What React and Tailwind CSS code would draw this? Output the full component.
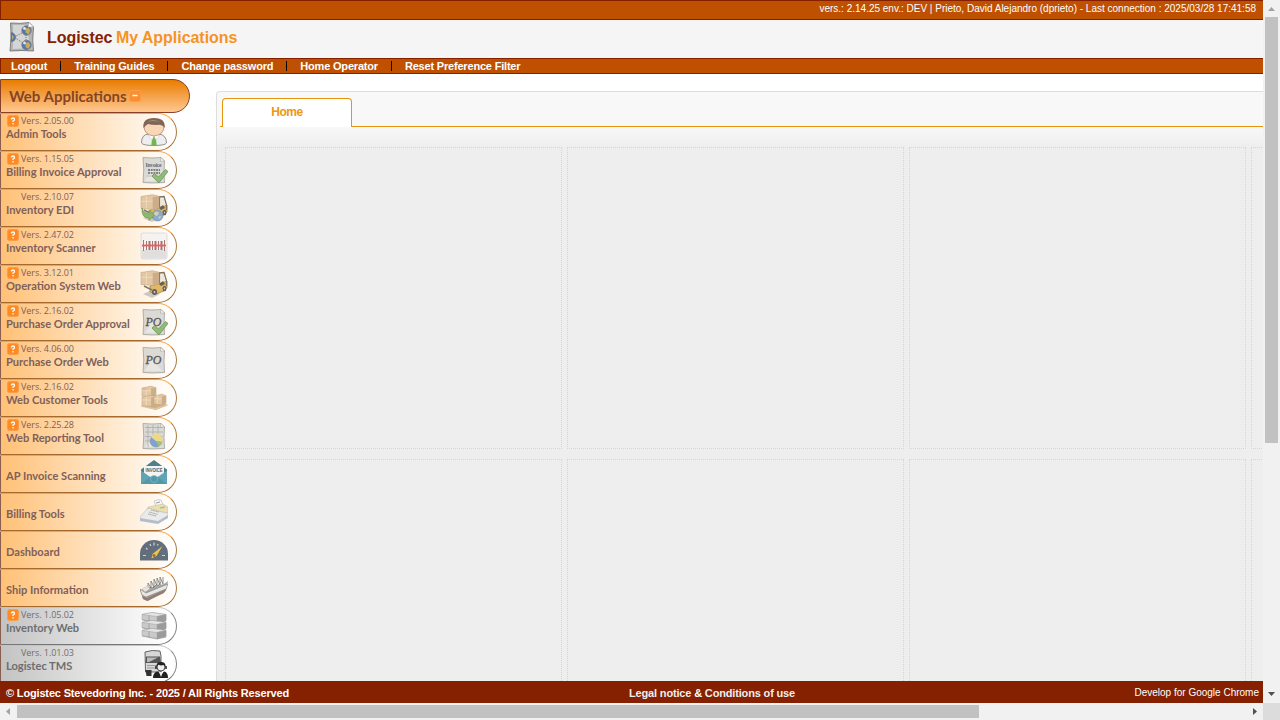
import React from "react";

const NAV = ["Logout", "Training Guides", "Change password", "Home Operator", "Reset Preference Filter"];

const APPS = [
  { name: "Admin Tools", version: "2.05.00", help: true, icon: "user" },
  { name: "Billing Invoice Approval", version: "1.15.05", help: true, icon: "invoice" },
  { name: "Inventory EDI", version: "2.10.07", icon: "edi" },
  { name: "Inventory Scanner", version: "2.47.02", help: true, icon: "scanner" },
  { name: "Operation System Web", version: "3.12.01", help: true, icon: "forklift" },
  { name: "Purchase Order Approval", version: "2.16.02", help: true, icon: "poCheck" },
  { name: "Purchase Order Web", version: "4.06.00", help: true, icon: "po" },
  { name: "Web Customer Tools", version: "2.16.02", help: true, icon: "boxes" },
  { name: "Web Reporting Tool", version: "2.25.28", help: true, icon: "report" },
  { name: "AP Invoice Scanning", icon: "envelope" },
  { name: "Billing Tools", icon: "register" },
  { name: "Dashboard", icon: "gauge" },
  { name: "Ship Information", icon: "ship" },
  { name: "Inventory Web", version: "1.05.02", help: true, icon: "stack", gray: true },
  { name: "Logistec TMS", version: "1.01.03", icon: "truck", gray: true },
];

const Paper = () => (
  <g>
    <path d="M3 1.500 Q12 2.500 21 1.500 L24.500 5 Q23.500 15 24.500 26.500 Q12 27.500 3 26.500 Q4.500 14 3 1.500Z" fill="#d8d7d3" stroke="#989793" strokeWidth=".8" />
    <path d="M21 1.500 L20.500 5.200 L24.500 5Z" fill="#fafafa" stroke="#888" strokeWidth=".5" />
    <path d="M5 25 L12 13 L22 25Z" fill="#f0efed" opacity=".6" />
  </g>
);

const Check = () => (
  <path d="M12 20 L14.500 17.500 L18.500 21 L25.500 13.500 L28 15.500 L18.800 27 Z" fill="#86b56c" stroke="#558a40" strokeWidth=".8" />
);

const Box = ({ x, y, w, h }) => (
  <g>
    <path d={`M${x} ${y + 2} l${w * 0.65} -1.8 l${w * 0.35} 1.5 v${h - 2} l${-w * 0.35} 1.8 l${-w * 0.65} -1z`} fill="#e0c29d" stroke="#b2936c" strokeWidth=".5" />
    <path d={`M${x + w * 0.65} ${y + 2.5} l${w * 0.35} -.8 v${h - 2} l${-w * 0.35} 1.8z`} fill="#c6a57f" />
    <path d={`M${x} ${y + h / 2} h${w * 0.65} M${x + w * 0.3} ${y + 1.5} v${h - 1}`} stroke="#f4dfbd" strokeWidth=".7" />
  </g>
);

const Lift = () => (
  <g>
    <path d="M3 24 L12 20 L20 24 L12 28Z" fill="#888" opacity=".45" />
    <path d="M18 14 L27 11 V18 L24 21 L16 24 L10 22 L10 16Z" fill="#dfb254" stroke="#83703e" strokeWidth=".7" />
    <path d="M19.500 13V3 L24 2.500 L26.500 11 V16" fill="none" stroke="#716650" strokeWidth="1.400" />
    <path d="M20.500 4.500 L23.500 4 L25.500 11 L21 12.500Z" fill="#eee7d4" />
    <path d="M19 14l4-3 2 3-4 2z" fill="#545149" />
    <ellipse cx="14.500" cy="22" rx="2.600" ry="3" fill="#555149" /><ellipse cx="24.500" cy="18.500" rx="2" ry="2.700" fill="#555149" />
    <ellipse cx="14.500" cy="22" rx=".9" ry="1.100" fill="#ccc" /><ellipse cx="24.500" cy="18.500" rx=".7" ry="1" fill="#ccc" />
    <path d="M4 16l8 4" stroke="#70695b" strokeWidth="1.400" />
    <Box x={1} y={0.5} w={18} h={13.5} />
  </g>
);

const PoText = () => (
  <text x="5.500" y="17.500" fontFamily="Liberation Serif" fontSize="12" fontStyle="italic" fill="#484643" stroke="#484643" strokeWidth=".3" textLength="16" lengthAdjust="spacingAndGlyphs">PO</text>
);

const ICONS = {
  user: (
    <g>
      <path d="M1.500 25 Q1.500 16 9 16 H19 Q26.500 17 26.500 25 Q25 27.500 14 27.500 Q3 27.500 1.500 25Z" fill="#eeeef0" stroke="#777" strokeWidth=".8" />
      <path d="M12.500 18h3l1.200 9h-5.400z" fill="#73b84c" /><path d="M8 17 L12 22 L14 18 L16 22 L20 17" fill="#fff" stroke="#bbb" strokeWidth=".5" />
      <path d="M4 8 Q5 1 14 1 Q23 1 24 8 Q24 17 14 18 Q4 17 4 8Z" fill="#f9d6b5" stroke="#94745b" strokeWidth=".6" />
      <path d="M3.500 10 Q2 0 14 0 Q26 0 24.500 10 Q22 6 17 7 Q11 7 8 6 Q6 7 3.500 10Z" fill="#806657" />
      <path d="M7 4 Q13 0 20 4 Q13 2 7 4Z" fill="#a88c79" />
    </g>
  ),
  invoice: (
    <g><Paper />
      <text x="5.500" y="10.500" fontFamily="Liberation Serif" fontWeight="bold" fontSize="5.500" fill="#555" textLength="16">Invoice</text>
      <path d="M8 14h12M8 17h12" stroke="#555" strokeWidth="1.400" strokeDasharray="2 .7" /><path d="M7 20h10" stroke="#999" strokeWidth=".6" /><Check />
    </g>
  ),
  edi: (
    <g><Lift /><circle cx="17.500" cy="21.500" r="5.500" fill="#7fa4cc" stroke="#617f9f" strokeWidth=".6" /><path d="M14 19q3-3 5 0l-2 3-3-1zM18 23l3-1-1 3z" fill="#d9cd9c" />
      <path d="M2 14 Q4 20 9 19 L9 16 L14.500 21 L9 26.500 L9 24 Q1 24 2 14Z" fill="#83b05e" stroke="#5d863e" strokeWidth=".6" /></g>
  ),
  scanner: (
    <g>
      <rect x="1" y="1" width="26" height="26" rx="2" fill="#f5f3f3" stroke="#d7d3d3" strokeWidth=".8" />
      <path d="M1.500 18h25v7q0 1.500-2 1.500H3q-1.500 0-1.500-2z" fill="#dedcdd" />
      <path d="M3.500 8v11M6.500 9v9M12.500 9v9M18.500 9v9M24.500 8v11" stroke="#946969" strokeWidth="1" /><path d="M9.500 9v9M15.500 9v9M21.500 9v9" stroke="#946969" strokeWidth="2" />
      <path d="M2 13.500h24" stroke="#fa4545" strokeWidth="1.800" />
    </g>
  ),
  forklift: <Lift />,
  poCheck: <g><Paper /><PoText /><Check /></g>,
  po: <g><Paper /><PoText /></g>,
  boxes: (
    <g><path d="M2 22 L17 18 L28 21 L16 26Z" fill="#c6aa80" /><Box x={2} y={2} w={14} h={9.5} /><Box x={2} y={11} w={14} h={10} /><Box x={14} y={10} w={12} h={9.5} />
      <path d="M1 22l14 3 12-4" stroke="#dcc194" fill="none" strokeWidth="1.500" /><path d="M3 5h4" stroke="#dd9b88" /></g>
  ),
  report: (
    <g><Paper /><path d="M5 5.500h18M5 10h18M5 14.500h18M5 19h12M8 3v22M13 3v18M18 3v15" stroke="#a2a5a8" strokeWidth=".8" />
      <circle cx="16" cy="19" r="6" fill="#6f9bce" stroke="#7b8490" strokeWidth=".6" /><path d="M16 19L11 15A6 6 0 0 1 22 20Z" fill="#e9d67c" /><path d="M16 19L22 20A6 6 0 0 1 19 24.500Z" fill="#9dba6a" /></g>
  ),
  envelope: (
    <g><path d="M1 9.500 L14 0 L27 9.500V13H1Z" fill="#3f7281" /><path d="M4 6h20v10l-10 5L4 16z" fill="#f2f4f4" />
      <text x="5.500" y="12" fontFamily="Liberation Sans" fontWeight="bold" fontSize="5.500" fill="#414c50" textLength="17" lengthAdjust="spacingAndGlyphs">INVOICE</text>
      <path d="M1 10.500L11 17.500q3-2 6 0l10-7V24H1z" fill="#4f9cae" /><path d="M1 24L11 16.500q3-2 6 0L27 24z" fill="#3f8fa3" /><circle cx="14" cy="19" r="3.500" fill="none" stroke="#78b5c1" strokeWidth=".7" /></g>
  ),
  register: (
    <g transform="translate(0 2)"><path d="M14 1 Q18-1 21 0 L23 5 L16 6Z" fill="#f8f8f8" stroke="#aaa" strokeWidth=".6" /><path d="M16 3l4-1" stroke="#777" strokeWidth=".8" />
      <path d="M8 7L23 4 28 7V14L20 17 5 15Z" fill="#e9dda7" stroke="#b9b39c" strokeWidth=".5" />
      <path d="M0 17L8 8 22 12 28 13V17L19 22 0 20Z" fill="#e8eaeb" stroke="#a3a9ac" strokeWidth=".5" />
      <path d="M0 18L18 21 28 15V18L18 24 0 21Z" fill="#acb8c8" /><path d="M9 12l9 2.500M8 14l8 2M11 10l8 2" stroke="#9b9d97" strokeWidth="1" strokeDasharray="1.600 .6" /><path d="M20 8l5-1" stroke="#aab58d" strokeWidth="1.500" /></g>
  ),
  gauge: (
    <g transform="translate(0 2.500)"><path d="M0 22V15.500A14 14 0 0 1 28 15.500V22Z" fill="#526070" /><path d="M3 17h3M6 9.500l1.500 1.500M10 5.500l.8 2M14 4v3M22 17h3M18 5.500l-.5 1.500" stroke="#c9d0d3" strokeWidth="1.200" />
      <path d="M22.500 7.500L16.500 17.500 11.500 20 12.500 15.500Z" fill="#f0bf35" /><circle cx="14" cy="17" r="1.500" fill="#77693e" /></g>
  ),
  ship: (
    <g transform="translate(0 2)"><path d="M4 13L24 8 28 5 26 15 8 25 3 23 0 14Z" fill="#9c9c9d" /><path d="M0 13L6 17 28 8 26 13 6 21 2 19Z" fill="#e6e6e4" stroke="#666" strokeWidth=".5" />
      <path d="M2 20L7 22 26 13 24 17 7 25 3 23Z" fill="#88706a" /><path d="M8 14V7l3 5V5l3 6V3l3 7V2l3 7V1l3 7V1M6 14l5-3M13 12l4-4M18 10l3-4" fill="none" stroke="#686868" strokeWidth=".8" /><path d="M2 13l5-3 3 3-5 3z" fill="#e4e1dc" stroke="#999" strokeWidth=".3" /></g>
  ),
  stack: (
    <g>{[2.5, 10.5, 18.5].map((y) => <g key={y} stroke="#a0a0a0" strokeWidth=".5"><path d={`M2 ${y}L12 ${y - 2} 26 ${y}V${y + 6}L17 ${y + 8} 2 ${y + 5}Z`} fill="#cacaca" /><path d={`M2 ${y}L12 ${y - 2} 26 ${y} 17 ${y + 2}Z`} fill="#e5e5e5" /><path d={`M17 ${y + 2}L26 ${y}V${y + 6}L17 ${y + 8}Z`} fill="#9b9b9b" /><path d={`M9 ${y + 1}v6M2 ${y + 5.500}l15 3 9-2`} fill="none" stroke="#797979" /></g>)}</g>
  ),
  truck: (
    <g><path d="M5 2Q12-.5 20 1L21 6V22H5.500Z" fill="#d7d7d7" stroke="#444" strokeWidth=".8" /><path d="M6 6.500H20L21 13H5.500Z" fill="#555" /><path d="M7 7.500H18L9 12H7Z" fill="#bbb" /><path d="M7 15.500h12M7 18h9" stroke="#999" strokeWidth="1" /><path d="M5.500 20h6v6h-5z" fill="#333" />
      <circle cx="21" cy="17" r="4" fill="#eee" stroke="#222" strokeWidth=".8" /><path d="M16.500 17q-.5-5 4.500-5t4.500 5l-2-2q-3 1-5-.5z" fill="#222" /><path d="M16 16v3M26 16v3" stroke="#222" strokeWidth="1.500" /><path d="M13 28q0-6 5-6.500l3 3 3-3q4 .5 4 6.500z" fill="#222" /><path d="M19 22l2 5 2-5z" fill="#eee" /></g>
  ),
};

function Globe({ cx, cy }) {
  return <g><circle cx={cx} cy={cy} r="4.700" fill="#4d78b0" stroke="#777" strokeWidth=".8" /><path d={`M${cx - 1} ${cy - 2}l3-1 2 3-2 4-3-2z`} fill="#c5aa60" /><circle cx={cx - 2} cy={cy - 2} r="1.400" fill="#dce6ef" /></g>;
}

function Logo() {
  return (
    <svg className="ml-[9px] h-[30px] w-[26px] shrink-0" viewBox="0 0 26 30">
      <path d="M1.500 1Q12 2 20 .5L24.500 5Q23 19 24.500 29Q13 28 1 29Q3 14 1.500 1Z" fill="#b5b5b5" stroke="#666" strokeWidth=".8" />
      <path d="M4 3L18 3 21 26 4 27Z" fill="#d5d5d5" /><path d="M5 15L17 9M5 15L17 23M17 9V22" stroke="#777" strokeDasharray="1 1" fill="none" />
      <Globe cx={17.5} cy={8.5} /><path d="M2 10.500a4.700 4.700 0 0 1 0 9.400z" fill="#4d78b0" stroke="#777" strokeWidth=".6" /><path d="M3 13l2 2-2 3z" fill="#c5aa60" /><Globe cx={17.5} cy={23} /><path d="M20 .5L19 5 24.500 5Z" fill="#fff" stroke="#999" strokeWidth=".5" />
    </svg>
  );
}

function Badge() {
  return (
    <svg className="h-3 w-3" viewBox="0 0 12 12">
      <rect x=".5" y=".5" width="11" height="11" rx="2" fill="#fd8a24" stroke="#fd9c46" /><path d="M4.500 4.500q0-1.500 1.500-1.500t1.500 1.500q0 1-1.500 1.500v1M6 8v1.500" stroke="#fff" strokeWidth="1.300" fill="none" />
    </svg>
  );
}

function AppRow({ app }) {
  const tone = app.gray
    ? "border-t-[#c3c3c3] border-r-[#858585] border-b-[#777] bg-[linear-gradient(to_right,#c3c3c3,#ffffff_95%)] text-[#6e6e6e]"
    : "border-t-[#f9a33f] border-r-[#ad7739] border-b-[#a8692d] bg-[linear-gradient(to_right,#ffc177,#ffffff)] text-[#80605a]";
  return (
    <li className={`flex h-[38px] w-[177px] shrink-0 rounded-r-[19px] border border-l-[#8a5d51] ${tone}`}>
      <div className="flex w-[139px] shrink-0 flex-col items-start pl-[5px]">
        <div className="flex h-[13px] shrink-0 items-center">
          <span className="ml-px w-[14px] pt-px">{app.help && <Badge />}</span>
          {app.version && <span className="whitespace-nowrap font-['Open_Sans',sans-serif] text-[9px] leading-[13px] tracking-[-0.05px]">Vers. {app.version}</span>}
        </div>
        <span className="origin-left scale-x-[0.925] whitespace-nowrap font-['Lato',sans-serif] text-[12px] leading-[14px] font-bold">{app.name}</span>
      </div>
      <svg className={`mt-1 h-7 w-7 ${app.icon === "user" || app.gray ? "" : "opacity-90"}`} viewBox="0 0 28 28">{ICONS[app.icon]}</svg>
    </li>
  );
}

export default function App() {
  return (
    <div className="grid h-[720px] w-[1280px] grid-cols-[1263px_17px] grid-rows-[703px_17px] overflow-hidden bg-white font-['Liberation_Sans',sans-serif]">
      <div className="flex min-h-0 min-w-0 flex-col overflow-hidden">
        <div className="flex h-5 shrink-0 justify-end border border-r-0 border-[#851f00] bg-[#bf5000] pr-[7px] text-[10px] leading-4 text-white">
          <span className="whitespace-nowrap">vers.: 2.14.25 env.: DEV | Prieto, David Alejandro (dprieto) - Last connection : 2025/03/28 17:41:58</span>
        </div>
        <header className="flex h-[38px] shrink-0 items-center bg-[#f5f5f5] pb-1">
          <Logo />
          <h1 className="mt-0.5 ml-3 whitespace-nowrap text-[16px] font-bold tracking-[-0.04px] text-[#852000]">Logistec <span className="-ml-px text-[#f7931e]">My Applications</span></h1>
        </header>
        <nav className="flex h-4 shrink-0 items-center border border-r-0 border-[#851f00] bg-[#bf5000] pl-[10px] text-[11px] font-bold leading-[14px] tracking-[-0.19px] text-white">
          {NAV.map((item, i) => (
            <React.Fragment key={item}>
              {i > 0 && <span className="mx-[13px] h-[10px] w-px bg-black" />}
              <a className="whitespace-nowrap">{item}</a>
            </React.Fragment>
          ))}
        </nav>
        <div className="flex min-h-0 flex-1 overflow-hidden">
          <aside className="flex w-[216px] shrink-0 flex-col pt-[5px]">
            <h2 className="flex h-[34px] w-[190px] shrink-0 items-center rounded-r-[17px] border border-[#884127] bg-[linear-gradient(to_bottom,#e97c00,#ffc891)] pl-2 font-['Lato',sans-serif] text-[15px] font-bold text-[#854425]">
              <span className="w-[117px] whitespace-nowrap">Web Applications</span>
              <svg className="ml-[3px] h-3 w-3" viewBox="0 0 12 12"><rect x=".5" y=".5" width="11" height="11" rx="2" fill="#fc8e30" stroke="#fd9c48" /><path d="M3.500 5.500h5" stroke="#fff" strokeWidth="1.500" /></svg>
            </h2>
            <ul className="flex flex-col">{APPS.map((app) => <AppRow key={app.name} app={app} />)}</ul>
          </aside>
          <main className="mt-[17px] flex min-w-0 flex-1 flex-col overflow-hidden rounded-tl-[4px] border-t border-l border-[#ddd] bg-[#eeeeee]">
            <div className="flex h-[35px] shrink-0 items-end bg-[#f8f8f8]">
              <span className="h-px w-[5px] shrink-0 bg-[linear-gradient(to_right,transparent_3px,#e8940f_3px)]" />
              <div className="flex h-[29px] w-[130px] shrink-0 justify-center rounded-t-[4px] border border-b-0 border-[#e8940f] bg-white text-[12px] font-bold leading-[26px] tracking-[-0.4px] text-[#ee970f]">Home</div>
              <span className="h-px flex-1 bg-[#e8940f]" />
            </div>
            <div className="flex-1 bg-[linear-gradient(to_bottom,#f8f8f8,#eeeeee_20px)] pt-[20px] pl-2">
              <div className="grid grid-cols-[repeat(4,337px)] auto-rows-[302px] gap-x-[5px] gap-y-[10px]">
                {Array.from({ length: 8 }, (_, i) => <div key={i} className="border border-dotted border-[#ffcc99]" />)}
              </div>
            </div>
          </main>
        </div>
        <footer className="flex h-[22px] shrink-0 items-center bg-[#852000] pt-px pr-1 pl-[6px] text-[11px] font-bold leading-[20px] whitespace-nowrap text-white">
          <span className="w-[623px] shrink-0 tracking-[-0.16px]">© Logistec Stevedoring Inc. - 2025 / All Rights Reserved</span>
          <span className="tracking-[-0.16px] text-[#eee]">Legal notice <b className="text-white">&amp;</b> Conditions of use</span>
          <span className="ml-auto text-[10px] font-normal">Develop for Google Chrome</span>
        </footer>
      </div>
      <div className="flex flex-col items-center bg-[#f1f1f1]">
        <svg className="h-[17px] w-[17px] shrink-0" viewBox="0 0 17 17"><path d="M5 11L8.500 7 12 11Z" fill="#a3a3a3" /></svg>
        <div className="h-[426px] w-[13px] bg-[#c1c1c1]" />
        <svg className="mt-auto h-[17px] w-[17px] shrink-0" viewBox="0 0 17 17"><path d="M5 6L8.500 10 12 6Z" fill="#505050" /></svg>
      </div>
      <div className="flex items-center bg-[#f1f1f1]">
        <svg className="h-[17px] w-[17px] shrink-0" viewBox="0 0 17 17"><path d="M10 5L6 8.500 10 12Z" fill="#a3a3a3" /></svg>
        <div className="h-[13px] w-[962px] bg-[#c1c1c1]" />
        <svg className="ml-auto h-[17px] w-[17px] shrink-0" viewBox="0 0 17 17"><path d="M7 5L11 8.500 7 12Z" fill="#505050" /></svg>
      </div>
      <div className="bg-[#dcdcdc]" />
    </div>
  );
}
